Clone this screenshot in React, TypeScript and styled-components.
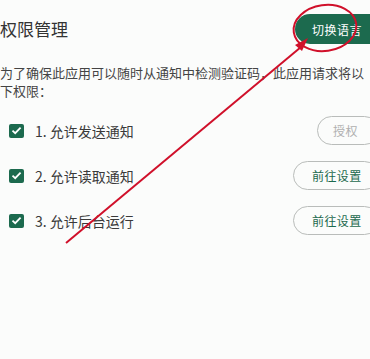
import React from "react";
import styled, { createGlobalStyle } from "styled-components";

const Global = createGlobalStyle`
  html, body { margin: 0; padding: 0; background: #fbfcfb; overflow: hidden; }
  body { font-family: "Noto Sans CJK SC", "Noto Sans", sans-serif; }
`;

const GREEN = "#1c6a4e";

const Page = styled.div`
  position: relative;
  width: 370px;
  height: 359px;
  overflow: hidden;
  background: #fbfcfb;
`;

const Inner = styled.div`
  width: 379px;
  padding-top: 14px;
  display: flex;
  flex-direction: column;
`;

const Header = styled.div`
  display: flex;
  align-items: center;
  justify-content: space-between;
  height: 30px;
  padding-left: 0;
`;

const Title = styled.h1`
  margin: 0;
  font-size: 17px;
  font-weight: 400;
  color: #333;
  line-height: 30px;
`;

const LangButton = styled.button`
  height: 30px;
  width: 84px;
  border: none;
  border-radius: 15px 0 0 15px;
  background: ${GREEN};
  color: #fff;
  font-family: inherit;
  font-size: 12px;
  padding: 0 0 0 17px;
  text-align: left;
  letter-spacing: 0.5px;
`;

const Desc = styled.p`
  margin: 20px 0 0;
  width: 370px;
  font-size: 13px;
  line-height: 18px;
  color: #444;
`;

const List = styled.div`
  margin-top: 16px;
  display: flex;
  flex-direction: column;
  gap: 16px;
`;

const Row = styled.div`
  display: flex;
  align-items: center;
  height: 29px;
  padding-left: 9px;
`;

const Check = styled.span`
  width: 15px;
  height: 14px;
  border-radius: 2px;
  background: ${GREEN};
  display: flex;
  align-items: center;
  justify-content: center;
  flex: none;
`;

const Label = styled.span`
  margin-left: 11px;
  font-size: 14px;
  color: #3a3a3a;
  flex: 1;
`;

const ActionButton = styled.button<{ $disabled?: boolean; $w: number }>`
  height: 29px;
  width: ${(p) => p.$w}px;
  border-radius: 15px;
  border: 1px solid #b9bcba;
  background: transparent;
  color: ${(p) => (p.$disabled ? "#b0b0b0" : GREEN)};
  font-family: inherit;
  font-size: 12px;
  padding: 0 0 0 ${(p) => (p.$disabled ? 15 : 18)}px;
  text-align: left;
  letter-spacing: 0.4px;
`;

const Overlay = styled.svg`
  position: absolute;
  left: 0;
  top: 0;
  pointer-events: none;
`;

const rows = [
  { label: "1. 允许发送通知", btn: "授权", disabled: true },
  { label: "2. 允许读取通知", btn: "前往设置", disabled: false },
  { label: "3. 允许后台运行", btn: "前往设置", disabled: false },
];

export default function App() {
  return (
    <Page>
      <Global />
      <Inner>
        <Header>
          <Title>权限管理</Title>
          <LangButton>切换语言</LangButton>
        </Header>
        <Desc>为了确保此应用可以随时从通知中检测验证码，此应用请求将以下权限：</Desc>
        <List>
          {rows.map((r) => (
            <Row key={r.label}>
              <Check>
                <svg width="11" height="9" viewBox="0 0 11 9">
                  <path d="M1.5 4.6 L4.2 7.2 L9.6 1.6" fill="none" stroke="#fff" strokeWidth="1.8" />
                </svg>
              </Check>
              <Label>{r.label}</Label>
              <ActionButton $disabled={r.disabled} $w={r.disabled ? 62 : 86}>
                {r.btn}
              </ActionButton>
            </Row>
          ))}
        </List>
      </Inner>
      <Overlay width="370" height="359" viewBox="0 0 370 359">
        <ellipse
          cx="325"
          cy="28"
          rx="31.5"
          ry="23"
          transform="rotate(-8 325 28)"
          fill="none"
          stroke="#d0102a"
          strokeWidth="2"
        />
        <line x1="66" y1="243" x2="301" y2="47" stroke="#d0102a" strokeWidth="2" />
        <polygon points="308,38 295,45 302,51" fill="#d0102a" />
      </Overlay>
    </Page>
  );
}
